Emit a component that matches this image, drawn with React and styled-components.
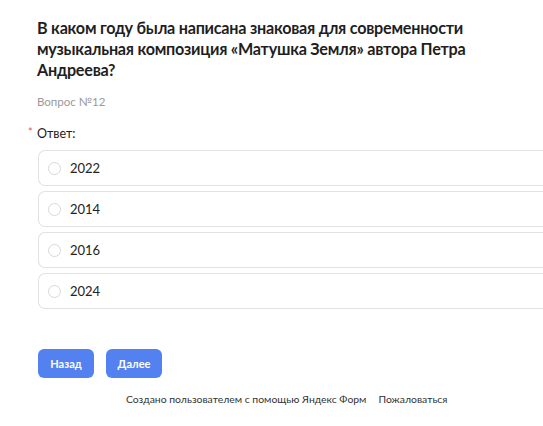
import React from "react";
import styled, { createGlobalStyle } from "styled-components";

const Global = createGlobalStyle`
  html, body { margin: 0; padding: 0; background: #fff; }
  body { font-family: "Lato", "Open Sans", sans-serif; color: #212121; }
  * { box-sizing: border-box; }
`;

const Page = styled.div`
  width: 543px;
  height: 426px;
  overflow: hidden;
  padding: 17px 0 0 37px;
`;

const Title = styled.h1`
  margin: 0;
  font-size: 16.2px;
  line-height: 21px;
  font-weight: 700;
  color: #1f1f1f;
  width: 470px;
  letter-spacing: -0.25px;
`;

const Number = styled.div`
  margin-top: 14px;
  font-size: 11.5px;
  line-height: 16px;
  color: #9a9a9a;
`;

const Label = styled.div`
  margin-top: 16px;
  font-size: 12.5px;
  line-height: 16px;
  color: #222;
  position: relative;
`;

const Star = styled.span`
  position: absolute;
  left: -9px;
  top: -2px;
  color: #e05a4e;
  font-size: 11px;
`;

const Options = styled.div`
  margin-top: 8px;
  margin-left: 1px;
  display: flex;
  flex-direction: column;
  gap: 5px;
  width: 520px;
`;

const Option = styled.label`
  display: flex;
  align-items: center;
  height: 36px;
  border: 1px solid #e2e2e2;
  border-right: none;
  border-radius: 7px 0 0 7px;
  padding-left: 9px;
  font-size: 13px;
  color: #222;
`;

const Radio = styled.span`
  width: 13px;
  height: 13px;
  border-radius: 50%;
  border: 1px solid #d8d8d8;
  margin-right: 9px;
`;

const Buttons = styled.div`
  display: flex;
  gap: 12px;
  margin-top: 40px;
  margin-left: 1px;
`;

const Button = styled.button`
  width: 56px;
  height: 29px;
  border: none;
  border-radius: 6px;
  background: #5382f0;
  color: #fff;
  font-family: inherit;
  font-size: 11px;
  font-weight: 700;
  padding: 0;
`;

const Footer = styled.div`
  display: flex;
  gap: 12px;
  margin-top: 15px;
  margin-left: 89px;
  font-size: 10.4px;
  color: #333;
`;

export default function App() {
  const years = ["2022", "2014", "2016", "2024"];
  return (
    <>
      <Global />
      <Page>
        <Title>
          В каком году была написана знаковая для современности музыкальная композиция «Матушка Земля» автора Петра Андреева?
        </Title>
        <Number>Вопрос №12</Number>
        <Label>
          <Star>*</Star>Ответ:
        </Label>
        <Options>
          {years.map((y) => (
            <Option key={y}>
              <Radio />
              {y}
            </Option>
          ))}
        </Options>
        <Buttons>
          <Button>Назад</Button>
          <Button>Далее</Button>
        </Buttons>
        <Footer>
          <span>Создано пользователем с помощью Яндекс Форм</span>
          <span>Пожаловаться</span>
        </Footer>
      </Page>
    </>
  );
}
